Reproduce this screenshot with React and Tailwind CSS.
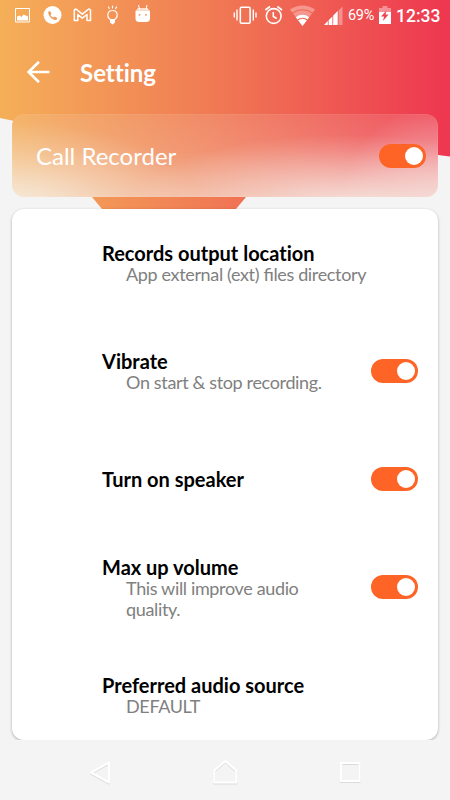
import React, { useState } from 'react';

const settings = [
  { id: 'location', title: 'Records output location', summary: 'App external (ext) files directory' },
  { id: 'vibrate', title: 'Vibrate', summary: 'On start & stop recording.', toggle: true },
  { id: 'speaker', title: 'Turn on speaker', toggle: true },
  { id: 'volume', title: 'Max up volume', summary: 'This will improve audio quality.', toggle: true },
  { id: 'source', title: 'Preferred audio source', summary: 'DEFAULT' },
];

const App = () => {
  const [enabled, setEnabled] = useState({ recorder: true, vibrate: true, speaker: true, volume: true });

  const toggle = (id) => setEnabled((prev) => ({ ...prev, [id]: !prev[id] }));

  return (
    <div className="relative isolate flex h-[800px] w-[450px] flex-col overflow-hidden bg-[#f4f4f4] font-['Lato',sans-serif]">
      <HeaderWave />
      <StatusBar />

      {/* App bar */}
      <header className="flex h-[82px] items-center gap-[27px] px-[25px]">
        <button aria-label="Back" className="mb-0.5 text-white">
          <svg width="28" height="28" viewBox="0 0 28 28" fill="none" stroke="currentColor" strokeWidth="2.6">
            <path d="M24.5 14H4M14 3.8L3.6 14L14 24.2" />
          </svg>
        </button>
        <h1 className="text-[24px] leading-[30px] font-bold text-white [font-variant-ligatures:none]">Setting</h1>
      </header>

      {/* Call recorder switch, frosted over the header */}
      <section className="mx-3 flex h-[83px] shrink-0 items-center justify-between rounded-xl bg-[radial-gradient(190px_85px_at_0%_112%,rgba(246,240,232,0.85),rgba(246,240,232,0.35)_50%,rgba(246,240,232,0)),radial-gradient(220px_75px_at_78%_115%,rgba(246,240,232,0.85),rgba(246,240,232,0.4)_50%,rgba(246,240,232,0)),radial-gradient(110px_100px_at_103%_105%,rgba(246,240,228,0.65),rgba(246,240,228,0)),linear-gradient(to_bottom,rgba(245,240,235,0.12),rgba(245,240,235,0.2)_45%,rgba(245,240,235,0.45)),linear-gradient(to_right,#f4ac58,#f07754_50%,#ee3c50)] pr-3 pl-6 shadow-[inset_0_0_0_1px_rgba(255,255,255,0.06)]">
        <span className="text-[24px] text-white">Call Recorder</span>
        <Switch label="Call Recorder" checked={enabled.recorder} onChange={() => toggle('recorder')} />
      </section>

      {/* Preferences */}
      <main className="mx-3 mt-3 h-[531px] shrink-0 overflow-hidden rounded-xl bg-white shadow-[0_1px_3px_rgba(0,0,0,0.3)]">
        {settings.map((item) => (
          <div key={item.id} className="flex h-[108px] items-center justify-between pr-5 pl-[90px]">
            <div className={item.summary ? 'pt-0.5' : ''}>
              <h2 className="text-[20px] leading-[21px] font-bold text-black [font-variant-ligatures:none]">{item.title}</h2>
              {item.summary && (
                <p className={`pl-6 text-[18px] leading-[21px] tracking-[-0.35px] text-[#808080] [font-feature-settings:'liga'] ${item.toggle ? 'w-[235px]' : ''}`}>{item.summary}</p>
              )}
            </div>
            {item.toggle && <Switch label={item.title} checked={enabled[item.id]} onChange={() => toggle(item.id)} />}
          </div>
        ))}
      </main>

      <NavigationBar />
    </div>
  );
};

const Switch = ({ label, checked, onChange }) => (
  <button
    role="switch"
    aria-label={label}
    aria-checked={checked}
    onClick={onChange}
    className={`flex h-6 w-[47px] shrink-0 items-center rounded-full px-[3px] ${checked ? 'justify-end bg-[#ff6427]' : 'justify-start bg-gray-300'}`}
  >
    <span className="h-[18px] w-[18px] rounded-full bg-white" />
  </button>
);

const HeaderWave = () => (
  <svg className="absolute inset-0 -z-10" width="450" height="230" viewBox="0 0 450 230">
    <defs>
      <linearGradient id="wave" x1="0" y1="0" x2="1" y2="0">
        <stop offset="0" stopColor="#f5af58" />
        <stop offset="0.5" stopColor="#f07754" />
        <stop offset="1" stopColor="#ee3650" />
      </linearGradient>
    </defs>
    <path d="M0 0H450V156.5L438 155C360 149 290 153 246 197L236 209L220 227H118L102 209L92 197C68 160 50 130 12 120.500L0 118Z" fill="url(#wave)" />
  </svg>
);

const StatusBar = () => (
  <div className="flex h-8 shrink-0 items-center font-['Roboto',sans-serif] text-white">
    <svg width="160" height="32" viewBox="0 0 160 32">
      {/* Screenshot */}
      <path d="M15.500 8.500H29.500V22H15.500Z" fill="none" stroke="white" strokeWidth="1" />
      <path d="M17 20.500V16.500L19.500 15.500L21.500 17L23.500 14.500L28 16.500V20.500Z" fill="white" />
      {/* Phone */}
      <circle cx="52.500" cy="15" r="9" fill="white" />
      <path d="M48.300 11.700L50 11L51.500 13.800L50.400 15Q51.600 17 53.500 17.600L54.700 16.500L57.300 18L56.500 19.800Q54.500 20.800 51.200 18Q47.800 14.800 48.300 11.700Z" fill="#f19b58" />
      {/* Mail */}
      <path d="M74.300 20.500V10L76 9L82.300 14.200L88.800 9L90.500 10V20.500H87V14.500L82.300 18.200L77.800 14.500V20.500Z" fill="none" stroke="white" strokeWidth="1.500" strokeLinejoin="round" />
      {/* Light bulb */}
      <g fill="none" stroke="white" strokeWidth="1.200" strokeLinecap="round">
        <path d="M110.300 19.500C106.500 16.800 107 10.500 112.500 10.500C118 10.500 118.500 16.800 114.700 19.500Z" />
        <path d="M112.500 6V8M108.500 7L109.300 8.500M116.500 7L115.700 8.500" />
      </g>
      <path d="M110 19.500H115V22.500L112.500 24.500L110 22.500Z" fill="white" />
      {/* Android head */}
      <path d="M138.500 5L139.500 9.500M147 5L146 9.500" stroke="white" strokeWidth="1.100" />
      <path d="M135.500 11L138 8H147.500L150 11Z" fill="white" fillOpacity="0.700" />
      <path d="M135.500 11H150V19Q149.500 22 146.500 22H139Q136 22 135.500 19Z" fill="white" />
      <circle cx="139.500" cy="14.800" r="0.900" fill="#f28c56" />
      <circle cx="146" cy="14.800" r="0.900" fill="#f28c56" />
    </svg>

    <svg className="ml-[70px]" width="115" height="32" viewBox="230 0 115 32">
      {/* Vibrate */}
      <rect x="240.300" y="7.200" width="9.800" height="16" rx="1.200" fill="none" stroke="white" strokeWidth="1.600" />
      <path d="M237 9.500V20.500M253.300 9.500V20.500M234.300 12.500V17.500M256 12.500V17.500" stroke="white" strokeWidth="1.400" />
      {/* Alarm */}
      <g fill="none" stroke="white" strokeWidth="1.600">
        <circle cx="273.700" cy="16" r="7.400" />
        <path d="M273.300 12V16.500L276.700 18.500M265.300 10L270 6.500M277.400 6.500L282 10" />
      </g>
      {/* Wi-Fi */}
      <path d="M290 9.500Q302.500 1.500 315 9.500L302.500 26Z" fill="white" fillOpacity="0.350" />
      <g fill="none" stroke="#f06750" strokeWidth="1.200">
        <path d="M292.500 13Q302.500 6.500 312.500 13" />
      </g>
      <path d="M295.800 17.200Q302.500 12.300 309.200 17.200L302.500 26Z" fill="white" />
      <path d="M297.500 20Q302.500 16.500 307.500 20" fill="none" stroke="#f06750" strokeWidth="1.200" />
      {/* Signal */}
      <path d="M338.500 10.500L342.500 6.500V25H338.500Z" fill="white" fillOpacity="0.350" />
      <path d="M324 25L327.800 21V25ZM328.600 20.200L332.400 16.400V25H328.600ZM333.200 15.600L337.700 11V25H333.200Z" fill="white" />
    </svg>

    <span className="ml-[3px] w-[28px] text-[14.500px] tracking-[-0.3px]">69%</span>

    {/* Battery */}
    <svg className="ml-[2px]" width="14" height="32" viewBox="0 0 14 32">
      <path d="M1 8H4.500V6H9.500V8H13V12H1Z" fill="white" fillOpacity="0.400" />
      <path d="M1 12H13V24H1Z" fill="white" />
      <path d="M8.500 10.500L3 16.500H6L5 21L10.500 14.500H7.500Z" fill="#ee4550" />
    </svg>
    <span className="ml-[4px] text-[17.500px] font-medium">12:33</span>
  </div>
);

const NavigationBar = () => (
  <nav className="relative z-10 flex h-[60px] items-center justify-between bg-[#f4f4f4] px-[88px] text-white">
    <button aria-label="Back">
      <svg className="drop-shadow-[0_1px_0.5px_rgba(0,0,0,0.1)]" width="24" height="28" viewBox="0 0 24 28" fill="none" stroke="currentColor" strokeWidth="2.2" strokeLinejoin="round">
        <path d="M21 6.500V26.500L3 16.500Z" />
      </svg>
    </button>
    <button aria-label="Home">
      <svg className="drop-shadow-[0_1px_0.5px_rgba(0,0,0,0.1)]" width="26" height="28" viewBox="0 0 26 28" fill="none" stroke="currentColor" strokeWidth="2.2" strokeLinejoin="round">
        <path d="M2.300 26.500V14.500L13.300 5L24.300 14.500V26.500Z" />
      </svg>
    </button>
    <button aria-label="Recents">
      <svg className="drop-shadow-[0_1px_0.5px_rgba(0,0,0,0.1)]" width="24" height="28" viewBox="0 0 24 28" fill="none" stroke="currentColor" strokeWidth="2.2" strokeLinejoin="round">
        <path d="M3 7H21.500V25H3Z" />
      </svg>
    </button>
  </nav>
);

export default App;
